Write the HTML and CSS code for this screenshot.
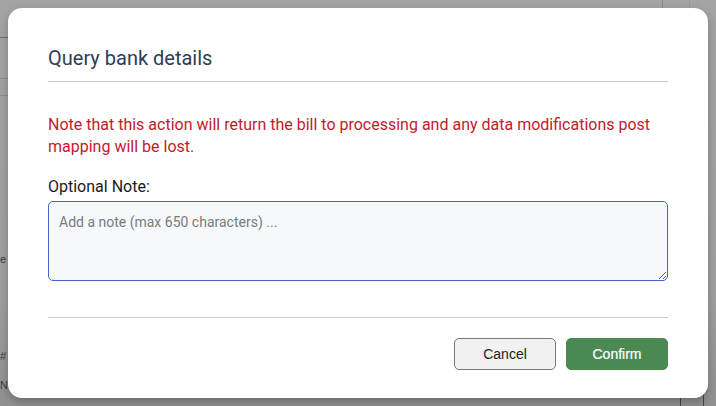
FILE: index.html
```html
<!DOCTYPE html>
<html lang="en">
<head>
<meta charset="utf-8">
<title>Query bank details</title>
<link rel="stylesheet" href="styles.css">
</head>
<body>
<div class="page">
  <div class="page-line line-a"></div>
  <div class="page-line line-b"></div>
  <div class="page-line line-c"></div>
  <div class="page-vline vline-a"></div>
  <div class="page-vline vline-b"></div>
  <span class="page-text text-e">e</span>
  <span class="page-text text-hash">#</span>
  <span class="page-text text-na">Na</span>
  <div class="page-box"></div>
</div>
<div class="overlay">
  <div class="modal" role="dialog" aria-labelledby="modal-title">
    <div class="modal-header">
      <h2 class="modal-title" id="modal-title">Query bank details</h2>
    </div>
    <div class="modal-body">
      <p class="warning">Note that this action will return the bill to processing and any data modifications post mapping will be lost.</p>
      <label class="note-label" for="note">Optional Note:</label>
      <textarea class="note-input" id="note" placeholder="Add a note (max 650 characters) ..."></textarea>
    </div>
    <div class="modal-footer">
      <button class="btn btn-cancel" type="button">Cancel</button>
      <button class="btn btn-confirm" type="button">Confirm</button>
    </div>
  </div>
</div>
</body>
</html>
```

FILE: styles.css
```css
html, body {
  margin: 0;
  padding: 0;
  width: 716px;
  height: 406px;
  overflow: hidden;
}

body {
  background: #a2a2a2;
  font-family: Roboto, "Liberation Sans", Arial, sans-serif;
  position: relative;
}

.page {
  position: absolute;
  inset: 0;
  background: linear-gradient(to bottom, #a4a4a4 0, #a0a0a0 300px, #909090 406px);
}

.page-line {
  position: absolute;
  left: 0;
  width: 20px;
  height: 1px;
}
.line-a { top: 37px; background: #6f6f6f; }
.line-b { top: 78px; background: #8e8e8e; }
.line-c { top: 95px; background: #8e8e8e; }

.page-vline {
  position: absolute;
  top: 0;
  width: 1px;
  height: 10px;
  background: #8a8a8a;
}
.vline-a { left: 662px; }
.vline-b { left: 689px; background: #999; }

.page-text {
  position: absolute;
  left: 0;
  font-size: 11px;
  line-height: 12px;
  color: #3a3a3a;
  font-family: "Liberation Sans", Arial, sans-serif;
}
.text-e { top: 253px; }
.text-hash { top: 350px; }
.text-na { top: 379px; }

.page-box {
  position: absolute;
  left: 680px;
  top: 392px;
  width: 22px;
  height: 20px;
  border: 1px solid #444;
  border-radius: 4px;
}

.overlay {
  position: absolute;
  inset: 0;
  padding: 8px;
  box-sizing: border-box;
  display: flex;
}

.modal {
  flex: 1;
  background: #fff;
  border-radius: 14px;
  box-shadow: 0 4px 10px rgba(0, 0, 0, 0.25);
  padding: 37px 40px 28px;
  display: flex;
  flex-direction: column;
  box-sizing: border-box;
}

.modal-header {
  padding-bottom: 10px;
  border-bottom: 1px solid #c3ccd3;
}

.modal-title {
  margin: 0;
  font-size: 20px;
  line-height: 26px;
  font-weight: 400;
  color: #2c3e56;
}

.modal-body {
  padding-top: 32px;
  padding-bottom: 36px;
  border-bottom: 1px solid #c8cdd1;
  display: flex;
  flex-direction: column;
}

.warning {
  margin: 0 0 19px;
  font-size: 16px;
  line-height: 22px;
  color: #c41a2c;
}

.note-label {
  font-size: 16px;
  line-height: 20px;
  color: #1a1a1a;
  margin-bottom: 4px;
}

.note-input {
  height: 80px;
  box-sizing: border-box;
  border: 1px solid #3f68c9;
  border-radius: 5px;
  background: #f7f8fa;
  padding: 10px 10px;
  font-family: Roboto, "Liberation Sans", Arial, sans-serif;
  font-size: 14px;
  line-height: 20px;
  color: #333;
  resize: vertical;
  outline: none;
}

.note-input::placeholder {
  color: #7a7a7a;
}

.modal-footer {
  padding-top: 20px;
  display: flex;
  justify-content: flex-end;
  gap: 10px;
}

.btn {
  width: 102px;
  height: 32px;
  border-radius: 5px;
  font-family: "Liberation Sans", Arial, sans-serif;
  font-size: 14px;
  cursor: pointer;
}

.btn-cancel {
  background: #f1f1f1;
  border: 1px solid #777;
  color: #222;
}

.btn-confirm {
  background: #4a8a52;
  border: 1px solid #4a8a52;
  color: #fff;
  font-weight: 500;
  -webkit-text-stroke: 0.2px #fff;
}
```
